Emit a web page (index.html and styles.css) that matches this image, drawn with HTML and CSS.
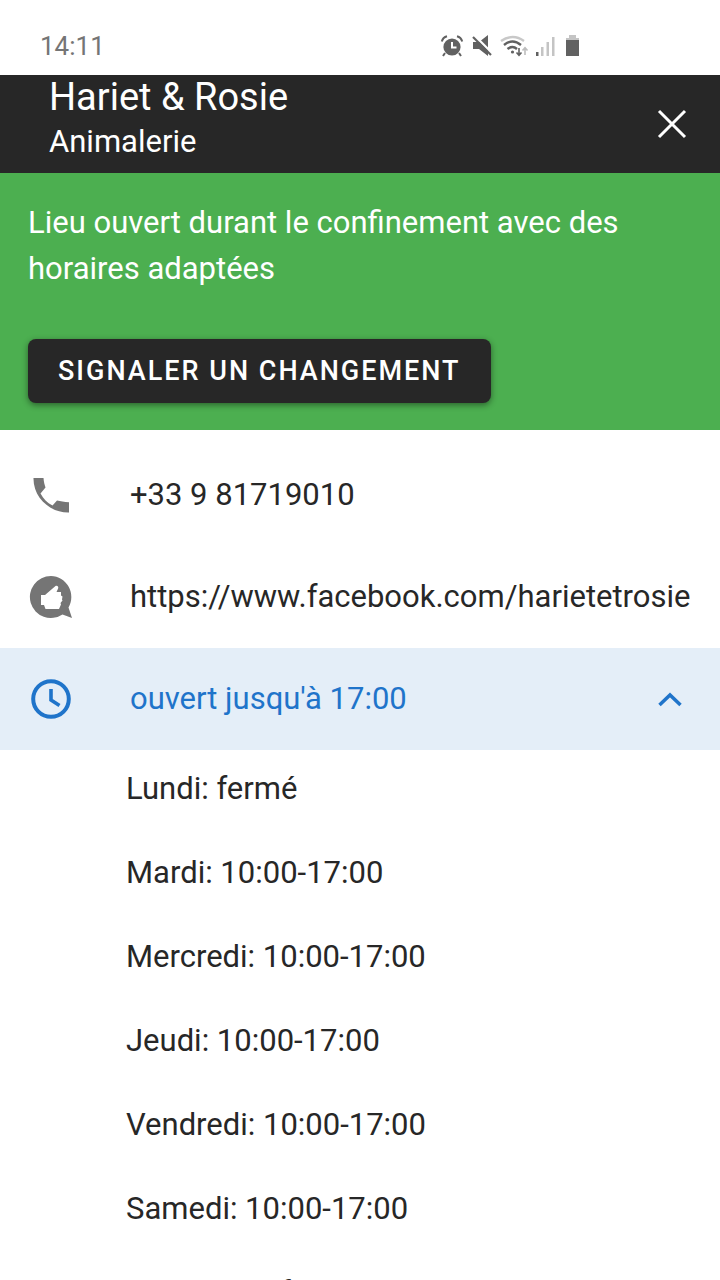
FILE: index.html
```html
<!DOCTYPE html>
<html lang="fr">
<head>
<meta charset="utf-8">
<meta name="viewport" content="width=device-width, initial-scale=1">
<title>Hariet &amp; Rosie</title>
<link rel="stylesheet" href="styles.css">
</head>
<body>
<div class="screen">
  <div class="status">
    <span class="time">14:11</span>
    <svg class="status-icons" width="144" height="26" viewBox="0 0 144 26" fill="#616161" aria-hidden="true">
      <circle cx="12" cy="14" r="8.6"/>
      <path d="M5 20l-2 3M19 20l2 3M1.800 8.500C2.500 6 4.500 4 7 3.300M22.200 8.500C21.500 6 19.500 4 17 3.300" fill="none" stroke="#616161" stroke-width="2"/>
      <path d="M12 9v5.500h4.500" fill="none" stroke="#fff" stroke-width="2"/>
      <path d="M33 9h6l9-7v21l-9-7h-6z"/>
      <path d="M34.500 2.500L53 21" stroke="#fff" stroke-width="2.400"/>
      <path d="M33 4l18 18" stroke="#616161" stroke-width="2.200"/>
      <path d="M61 8q12-8 23 0" fill="none" stroke="#c8c8c8" stroke-width="2.400"/>
      <path d="M64 12q8.500-7 17 0M67.500 16q5-4 9.500 0" fill="none" stroke="#616161" stroke-width="2.400"/>
      <circle cx="72.500" cy="19" r="1.600"/>
      <path d="M79 15v7M76.500 19.500l2.500 2.800 2.500-2.800" fill="none" stroke="#616161" stroke-width="1.600"/>
      <path d="M85 22v-7M82.500 17.500l2.500-2.800 2.500 2.800" fill="none" stroke="#bdbdbd" stroke-width="1.600"/>
      <path d="M96 19h2.500v4H96z"/>
      <path d="M101 14h2.500v9H101zM106.500 9h2.500v14h-2.500zM112 4h2.500v19H112z" fill="#c4c4c4"/>
      <path d="M129 2h7v3h3v3h-13V5h3z" fill="#c4c4c4"/>
      <path d="M126 7h13v16h-13z"/>
    </svg>
  </div>
  <header class="bar">
    <div class="heading">
      <h1 class="title">Hariet &amp; Rosie</h1>
      <p class="subtitle">Animalerie</p>
    </div>
    <button class="close" type="button" aria-label="Fermer">
      <svg width="32" height="32" viewBox="0 0 32 32" fill="none" stroke="#fff" stroke-width="3" aria-hidden="true"><path d="M3 3l26 26M29 3L3 29"/></svg>
    </button>
  </header>
  <section class="notice">
    <p class="notice-text">Lieu ouvert durant le confinement avec des horaires adaptées</p>
    <button class="report" type="button">SIGNALER UN CHANGEMENT</button>
  </section>
  <main class="details">
    <a class="row" href="tel:+33981719010">
      <svg class="icon" width="46" height="46" viewBox="0 0 46 46" fill="#757575" aria-hidden="true"><path d="M5.500 6h10c.3 4 1 6.500 2 9.500L12.500 21.500c3 5.500 6.500 9 12 12L29 28.500c3.500.8 7 1.500 12 1.800V40.500C21.500 41 5 25 5.500 6z"/></svg>
      <span class="label">+33 9 81719010</span>
    </a>
    <a class="row" href="https://www.facebook.com/harietetrosie">
      <svg class="icon" width="46" height="46" viewBox="0 0 46 46" aria-hidden="true"><path d="M23 2a21 21 0 1 0 11.500 38.500L44 44l-3.500-10.500A21 21 0 0 0 23 2z" fill="#757575"/><path d="M13 21h4l10.500-9c2-.8 3.500 1 2.500 2.800L28.500 18H33v3.500l1.500 1-.5 3 .5 1-2 2.500.5 1.500-2 4.500H17.500l-1.500-4h-3z" fill="#fff"/></svg>
      <span class="label">https://www.facebook.com/harietetrosie</span>
    </a>
    <button class="row active" type="button" aria-expanded="true" aria-controls="hours">
      <svg class="icon" width="46" height="46" viewBox="0 0 46 46" fill="none" stroke="#1f74ca" stroke-width="4" aria-hidden="true"><circle cx="23" cy="23" r="17.800"/><path d="M23 13v11l8.500 5.500" stroke-width="3.600"/></svg>
      <span class="label">ouvert jusqu'à 17:00</span>
      <svg class="chevron" width="28" height="28" viewBox="0 0 28 28" fill="none" stroke="#1f74ca" stroke-width="3.500" aria-hidden="true"><path d="M3.500 20L14 10l10.500 10"/></svg>
    </button>
    <ul class="hours" id="hours">
      <li>Lundi: fermé</li>
      <li>Mardi: 10:00-17:00</li>
      <li>Mercredi: 10:00-17:00</li>
      <li>Jeudi: 10:00-17:00</li>
      <li>Vendredi: 10:00-17:00</li>
      <li>Samedi: 10:00-17:00</li>
      <li>Dimanche: fermé</li>
    </ul>
  </main>
</div>
</body>
</html>
```
FILE: styles.css
```css
* { box-sizing: border-box; margin: 0; padding: 0; }
body { background: #fff; color: #272727; font: 31px/46px Roboto, "Liberation Sans", sans-serif; }
button { border: 0; font: inherit; cursor: pointer; }
svg { display: block; flex: none; }
.screen { display: flex; flex-direction: column; height: 100vh; overflow: hidden; }
.status { display: flex; flex: none; align-items: center; justify-content: space-between; padding: 16px 136px 0 40px; height: 75px; }
.time { color: #757575; font-size: 26px; }
.bar { display: flex; flex: none; align-items: center; justify-content: space-between; padding: 0 32px 8px 49px; background: #272727; color: #fff; }
.title { font-size: 38px; font-weight: 400; line-height: 44px; }
.subtitle { line-height: 46px; }
.close { padding: 0; margin-top: 8px; background: none; }
.notice { flex: none; padding: 27px 28px; background: #4caf50; color: #fff; }
.notice-text { margin-bottom: 47px; }
.report { padding: 0 30px; border-radius: 8px; background: #272727; color: #fff; font-size: 27px; font-weight: 500; line-height: 64px; letter-spacing: 2px; box-shadow: 0 2px 6px rgba(0, 0, 0, .45); display: block; }
.details { flex: 1; min-height: 0; padding-top: 14px; }
.row { display: flex; align-items: center; width: 100%; min-height: 102px; padding: 0 28px; background: none; color: inherit; text-align: left; text-decoration: none; }
.icon { margin-right: 56px; }
.label { flex: 1; white-space: nowrap; }
.active { background: #e4eef8; color: #1f74ca; }
.chevron { margin-right: 8px; }
.hours { padding: 16px 28px 0 126px; list-style: none; }
.hours li { margin-bottom: 38px; }
```
